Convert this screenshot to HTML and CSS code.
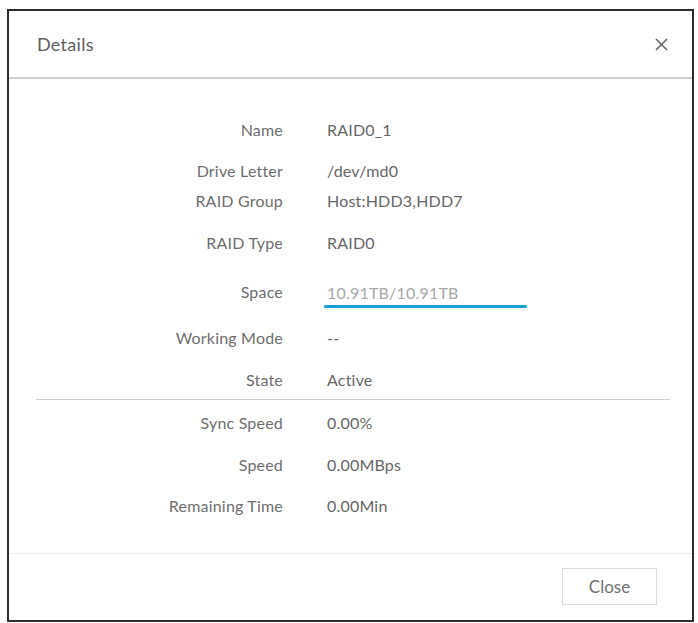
FILE: index.html
```html
<!DOCTYPE html>
<html lang="en">
<head>
<meta charset="UTF-8" />
<meta name="viewport" content="width=device-width, initial-scale=1" />
<title>Details</title>
<link rel="stylesheet" href="styles.css">
</head>
<body>

  <div class="dialog" role="dialog" aria-label="Details">
    <header class="dialog-header">
      <h2>Details</h2>
      <button class="close-x" aria-label="Close">
        <svg width="13" height="13" viewBox="0 0 13 13">
          <path d="M1 1 L12 12 M12 1 L1 12" stroke="#666" stroke-width="1.6" fill="none" />
        </svg>
      </button>
    </header>

    <section class="dialog-body">
      <div class="rows">
        <div class="row"><span class="label">Name</span><span class="value">RAID0_1</span></div>
        <div class="row row-drive"><span class="label">Drive Letter</span><span class="value">/dev/md0</span></div>
        <div class="row row-tight"><span class="label">RAID Group</span><span class="value">Host:HDD3,HDD7</span></div>
        <div class="row"><span class="label">RAID Type</span><span class="value">RAID0</span></div>
        <div class="row row-space">
          <span class="label">Space</span>
          <span class="value space">
            <span class="space-text">10.91TB/10.91TB</span>
            <span class="bar"><span class="bar-fill" style="width: 100%"></span></span>
          </span>
        </div>
        <div class="row row-mode"><span class="label">Working Mode</span><span class="value">--</span></div>
        <div class="row"><span class="label">State</span><span class="value">Active</span></div>
      </div>

      <div class="divider"></div>

      <div class="rows">
        <div class="row"><span class="label">Sync Speed</span><span class="value">0.00%</span></div>
        <div class="row"><span class="label">Speed</span><span class="value">0.00MBps</span></div>
        <div class="row row-drive"><span class="label">Remaining Time</span><span class="value">0.00Min</span></div>
      </div>
    </section>

    <footer class="dialog-footer">
      <button class="btn">Close</button>
    </footer>
  </div>

</body>
</html>
```

FILE: styles.css
```css
body {
  margin: 0;
  background: #fff;
  font-family: Lato, 'Open Sans', sans-serif;
  color: #5a5a5a;
}

/* Caja del dialogo */
.dialog {
  margin: 9px 0 0 7px;
  width: 687px;
  height: 613px;
  border: 2px solid #2e2e2e;
  box-sizing: border-box;
  display: flex;
  flex-direction: column;
  background: #fff;
}

.dialog-header {
  height: 68px;
  border-bottom: 2px solid #cfcfcf;
  box-sizing: border-box;
  display: flex;
  align-items: center;
  justify-content: space-between;
  padding: 0 24px 0 28px;
}
.dialog-header h2 {
  margin: 0;
  font-size: 18px;
  letter-spacing: 0.3px;
  font-weight: 400;
  color: #606060;
}
.close-x {
  border: none;
  background: none;
  padding: 0;
  cursor: pointer;
  display: flex;
}

/* Filas de datos */
.dialog-body {
  padding-top: 35px;
  flex-grow: 1;
}
.rows {
  display: flex;
  flex-direction: column;
  gap: 12px;
}
.row {
  display: flex;
  align-items: center;
  height: 30px;
  font-size: 16px;
}
.row-drive {
  margin-top: -1px;
}
.row-tight {
  margin-top: -12px;
}
.row-space {
  margin-top: 7px;
}
.row-mode {
  margin-top: 4px;
}
.label {
  width: 274px;
  text-align: right;
  color: #6e6e6e;
  letter-spacing: 0.2px;
}
.value {
  margin-left: 44px;
  color: #666;
  letter-spacing: 0.2px;
}
.value.space {
  margin-left: 41px;
  display: flex;
  flex-direction: column;
  padding-top: 8px;
}
.space-text {
  color: #a8a8a8;
  padding-left: 3px;
}
.bar {
  display: block;
  width: 203px;
  height: 3px;
  margin-top: 3px;
  background: #e3e3e3;
  border-radius: 2px;
}
.bar-fill {
  display: block;
  height: 100%;
  background: #1e9fd6;
  border-radius: 2px;
}

.divider {
  height: 1px;
  background: #cfcfcf;
  margin: 5px 22px 7px 27px;
}

/* Pie con boton */
.dialog-footer {
  border-top: 1px solid #ececec;
  padding: 14px 35px 15px 0;
  display: flex;
  justify-content: flex-end;
}
.btn {
  width: 95px;
  height: 37px;
  border: 1px solid #dcdcdc;
  background: #fff;
  font-family: Lato, 'Open Sans', sans-serif;
  font-size: 17px;
  color: #707070;
  cursor: pointer;
}
```
